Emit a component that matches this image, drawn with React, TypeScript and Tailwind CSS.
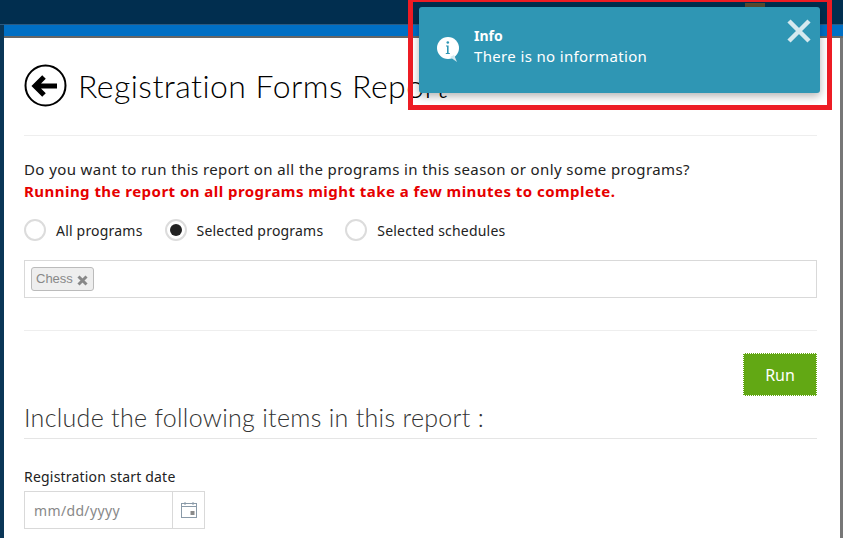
const Radio = ({ label, checked }: { label: string; checked?: boolean }) => (
  <label className="flex items-center gap-[10px]">
    <span className="flex h-[22px] w-[22px] items-center justify-center rounded-full border-2 border-[#dcdcdc] bg-white">
      {checked && <span className="h-[12px] w-[12px] rounded-full bg-[#222]" />}
    </span>
    <span className="text-[14px] tracking-[0.2px] text-[#222]">{label}</span>
  </label>
);

export default function App() {
  return (
    <div className="relative h-[538px] w-[843px] overflow-hidden bg-[#0a3657] font-['Noto_Sans',sans-serif]">
      <div className="h-[25px] border-b border-[#2c5a80] bg-[#012e4f] pt-[3px]">
        <div className="ml-[745px] h-[4px] w-[20px] bg-[#5a4a30]" />
      </div>
      <div className="ml-[4px] mr-0 h-[13px] border-b-2 border-[#666] bg-[#006fc4]" />
      <div className="ml-[4px] h-[500px] border-r-[3px] border-[#777] bg-white pl-[20px] pr-[23px]">
        {/* Title */}
        <div className="flex h-[98px] items-center gap-[11px] border-b border-[#eee] pb-[2px]">
          <svg width="43" height="43" viewBox="0 0 43 43" className="shrink-0">
            <circle cx="21.5" cy="21.5" r="20" fill="none" stroke="#000" strokeWidth="2" />
            <path d="M20 13l-9 9 9 9M12 22h21" fill="none" stroke="#000" strokeWidth="5" />
          </svg>
          <h1 className="font-['Lato',sans-serif] text-[32px] font-light tracking-[0.45px] text-black">
            Registration Forms Report
          </h1>
        </div>

        <p className="mt-[23px] text-[15px] leading-[21px] tracking-[0.4px] text-[#222]">
          Do you want to run this report on all the programs in this season or only some programs?
        </p>
        <p className="mt-[1px] text-[15px] font-bold leading-[21px] tracking-[0.46px] text-[#e60000]">
          Running the report on all programs might take a few minutes to complete.
        </p>

        <div className="mt-[17px] flex gap-[22px]">
          <Radio label="All programs" />
          <Radio label="Selected programs" checked />
          <Radio label="Selected schedules" />
        </div>

        <div className="mt-[19px] flex h-[38px] items-center border border-[#d9d9d9] px-[6px]">
          <span className="flex h-[24px] items-center gap-[4px] rounded-[3px] border border-[#bbb] bg-[#eee] pl-[4px] pr-[5px] font-['Liberation_Sans',sans-serif] text-[13px] text-[#888]">
            Chess
            <svg width="11" height="11" viewBox="0 0 11 11" className="mt-[2px]">
              <path d="M1.5 1.5l8 8M9.5 1.5l-8 8" stroke="#888" strokeWidth="3" />
            </svg>
          </span>
        </div>

        <div className="mt-[32px] border-t border-[#eee]" />

        <div className="mt-[22px] flex justify-end">
          <button className="h-[43px] w-[74px] border border-dotted border-white bg-[#62a814] text-[16px] text-white">
            Run
          </button>
        </div>

        <h2 className="mt-[5px] border-b border-[#e5e5e5] pb-[5px] font-['Lato',sans-serif] text-[25px] font-light leading-[32px] tracking-[0.3px] text-[#333]">
          Include the following items in this report :
        </h2>

        <label className="mt-[28px] block text-[14px] leading-[20px] tracking-[0.2px] text-[#222]">
          Registration start date
        </label>
        <div className="mt-[4px] flex h-[38px] w-[181px] items-center border border-[#d9d9d9]">
          <span className="flex-1 pl-[9px] text-[14px] tracking-[0.35px] text-[#888]">mm/dd/yyyy</span>
          <span className="flex h-full w-[32px] items-center justify-center border-l border-[#d9d9d9]">
            <svg width="16" height="16" viewBox="0 0 16 16">
              <rect x="0.5" y="1.5" width="15" height="14" fill="none" stroke="#8a9aa8" />
              <path d="M1 4.5h14" stroke="#8a9aa8" />
              <path d="M4 0v3M12 0v3" stroke="#8a9aa8" />
              <rect x="9.5" y="9" width="4" height="4" fill="#8a8a8a" />
            </svg>
          </span>
        </div>
      </div>

      {/* Notification callout */}
      <div className="absolute left-[408px] top-[-3px] h-[113px] w-[424px] border-[5px] border-[#ed1c24]">
        <div className="absolute left-[6px] top-[5px] flex h-[86px] w-[401px] rounded-[3px] bg-[#2f96b4] shadow-[0_3px_8px_rgba(0,0,0,0.3)]">
          <svg className="ml-[18px] mt-[30px]" width="22" height="26" viewBox="0 0 22 26">
            <circle cx="11" cy="11" r="11" fill="#fff" />
            <path d="M13 20l7 5-3-7z" fill="#d5e9ef" />
            <path d="M9 8.5h2.6v7.5h1.2v1h-4v-1h1.2v-6.5h-1z" fill="#2f96b4" />
            <circle cx="10.8" cy="5.5" r="1.3" fill="#2f96b4" />
          </svg>
          <div className="ml-[15px] mt-[19px] text-white">
            <div className="text-[14px] font-bold leading-[20px]">Info</div>
            <div className="text-[15px] leading-[21px] tracking-[0.35px]">There is no information</div>
          </div>
          <svg className="absolute right-[9px] top-[12px]" width="24" height="24" viewBox="0 0 24 24">
            <path d="M2 2l20 20M22 2L2 22" stroke="#d5e9ef" strokeWidth="4.5" />
          </svg>
        </div>
      </div>
    </div>
  );
}
